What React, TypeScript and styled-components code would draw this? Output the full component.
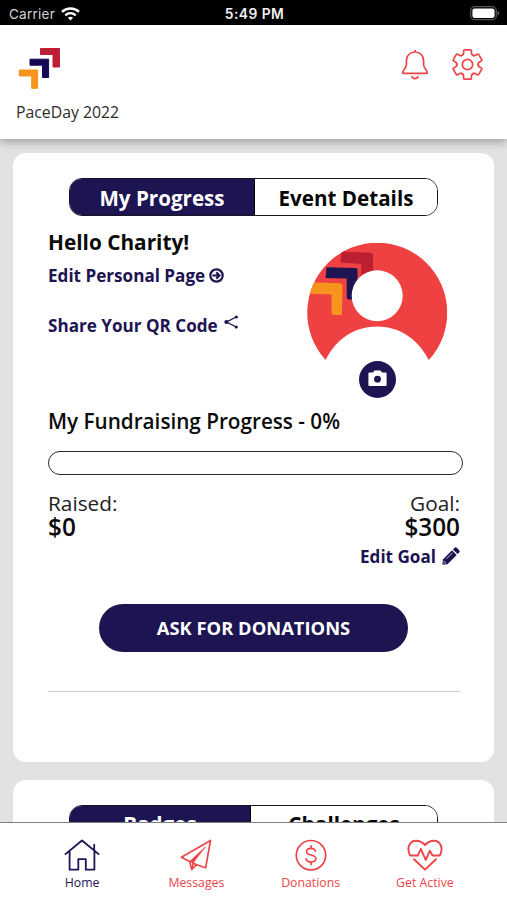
import React from "react";
import styled, { createGlobalStyle } from "styled-components";

const NAVY = "#1d1452";
const RED = "#ec4549";

const GlobalStyle = createGlobalStyle`
  * { box-sizing: border-box; }
  body { margin: 0; background: #e2e2e2; }
  svg { display: block; flex: none; overflow: visible; }
  button { font: inherit; cursor: pointer; }
`;

const Screen = styled.div`
  width: 507px;
  height: 900px;
  display: flex;
  flex-direction: column;
  overflow: hidden;
  background: #e2e2e2;
  color: #0b0b0b;
  font-family: "Open Sans", "Noto Sans", sans-serif;
`;

const StatusBar = styled.div`
  flex: none;
  height: 25px;
  padding: 2px 7px 0 9px;
  display: grid;
  grid-template-columns: 1fr auto 1fr;
  align-items: center;
  background: #000;
  color: #f2f2f2;
  font-family: Inter, sans-serif;
  font-size: 13.5px;
`;

const Carrier = styled.div`
  display: flex;
  align-items: center;
  gap: 6px;
  letter-spacing: 0.25px;
  color: #d4d4d4;
`;

const Clock = styled.div`
  font-size: 13.8px;
  font-weight: 600;
  letter-spacing: 0.45px;
`;

const BatterySlot = styled.div`
  justify-self: end;
`;

const Header = styled.header`
  flex: none;
  z-index: 1;
  height: 114px;
  padding: 23px 23px 0 16px;
  display: flex;
  justify-content: space-between;
  background: #fff;
  box-shadow: 0 2px 9px rgba(0, 0, 0, 0.36);
`;

const Brand = styled.div`
  display: flex;
  flex-direction: column;
  gap: 10px;
`;

const EventName = styled.div`
  font-size: 15.8px;
  line-height: 25px;
  color: #2b2b2b;
`;

const HeaderActions = styled.div`
  display: flex;
  height: 34px;
  gap: 23px;
`;

const IconButton = styled.button`
  display: flex;
  padding: 0;
  border: 0;
  background: none;
`;

const Content = styled.main`
  flex: 1;
  min-height: 0;
  overflow: hidden;
  display: flex;
  flex-direction: column;
  gap: 18px;
  padding: 14px 13px 0;
`;

const Card = styled.section<{ $height: number }>`
  flex: none;
  height: ${(p) => p.$height}px;
  padding: 25px 34px 0 35px;
  border-radius: 13px;
  background: #fff;
`;

const Tabs = styled.div`
  display: flex;
  width: 369px;
  height: 38px;
  margin: 0 0 0 21px;
  overflow: hidden;
  border: 1.5px solid #17151f;
  border-radius: 13px;
`;

const Tab = styled.button<{ $active?: boolean; $width?: number; $inset?: number }>`
  ${(p) => (p.$width ? `width: ${p.$width}px;` : "flex: 1;")}
  padding: ${(p) => p.$inset ?? 0}px 0 0;
  border: 0;
  border-right: ${(p) => (p.$active ? "1px solid #000" : "0")};
  background: ${(p) => (p.$active ? NAVY : "#fff")};
  color: ${(p) => (p.$active ? "#fff" : "#050505")};
  font-size: 20.6px;
  font-weight: 700;
  line-height: 36px;
`;

const Profile = styled.div`
  display: flex;
  justify-content: space-between;
  height: 182px;
  padding: 12px 13px 0 0;
`;

const Greeting = styled.h1`
  margin: 0;
  font-size: 20.8px;
  line-height: 28px;
  font-weight: 700;
`;

const TextLink = styled.a<{ $gap: number; $top: number }>`
  display: flex;
  align-items: center;
  gap: ${(p) => p.$gap}px;
  height: 24px;
  margin-top: ${(p) => p.$top}px;
  color: ${NAVY};
  font-size: 17.1px;
  font-weight: 700;
  white-space: nowrap;
`;

const ShareSlot = styled.span`
  padding-bottom: 6px;
`;

const Avatar = styled.div`
  width: 140px;
  display: flex;
  flex-direction: column;
  align-items: center;
  padding-top: 15px;
`;

const CameraButton = styled.button`
  display: flex;
  align-items: center;
  justify-content: center;
  width: 37px;
  height: 37px;
  padding: 0 0 3px;
  border: 0;
  border-radius: 50%;
  background: ${NAVY};
`;

const ProgressTitle = styled.h2`
  margin: 8px 0 0;
  font-size: 20.7px;
  line-height: 30px;
  font-weight: 600;
`;

const ProgressTrack = styled.div`
  width: 415px;
  height: 24px;
  margin-top: 15px;
  border: 1.5px solid #292929;
  border-radius: 12px;
`;

const Totals = styled.div`
  display: flex;
  justify-content: space-between;
  margin-top: 16px;
`;

const Total = styled.div<{ $end?: boolean }>`
  display: flex;
  flex-direction: column;
  align-items: ${(p) => (p.$end ? "flex-end" : "flex-start")};
`;

const TotalLabel = styled.div`
  font-size: 20.8px;
  line-height: 24px;
  color: #222;
`;

const Amount = styled.div`
  font-size: 24.3px;
  line-height: 24px;
  font-weight: 600;
`;

const DonateButton = styled.button`
  display: block;
  width: 309px;
  height: 48px;
  margin: 36px 0 0 51px;
  padding: 0 0 1px;
  border: 0;
  border-radius: 24px;
  background: ${NAVY};
  color: #fff;
  font-size: 18.35px;
  font-weight: 700;
`;

const Divider = styled.hr`
  height: 1px;
  margin: 39px 0 0;
  border: 0;
  background: #cbcbcb;
`;

const Nav = styled.nav`
  flex: none;
  z-index: 1;
  height: 78px;
  padding: 14.5px 25px 0;
  display: grid;
  grid-template-columns: repeat(4, 1fr);
  border-top: 1px solid #7f7f7f;
  background: #fff;
`;

const NavItem = styled.a<{ $active?: boolean }>`
  display: flex;
  flex-direction: column;
  align-items: center;
  gap: 1px;
  color: ${(p) => (p.$active ? NAVY : RED)};
  font-size: 12.3px;
  line-height: 20px;
`;

const Chevrons = () => (
  <svg width="48" height="42" viewBox="16 48 48 42" strokeLinejoin="round" strokeWidth="1">
    <path d="M40.5 48.5H59.5V67H53V54.5H40.5Z" fill="#bd1f35" stroke="#bd1f35" />
    <path d="M30 59.2H48.6V77.5H42.5V65.2H30Z" fill="#160655" stroke="#160655" />
    <path d="M19.3 70H37.6V88.3H31.7V76H19.3Z" fill="#f7941e" stroke="#f7941e" />
  </svg>
);

const Wifi = () => (
  <svg width="19" height="14" viewBox="0 0 19 14" fill="none" stroke="#fff" strokeWidth="2.4">
    <path d="M1 4.8C5.8.3 13.2.3 18 4.8" />
    <path d="M4.3 8.3C7.4 5.5 11.6 5.5 14.7 8.3" />
    <path d="M9.5 13.4L6.9 10.7C8.4 9.4 10.6 9.4 12.1 10.7Z" fill="#fff" stroke="none" />
  </svg>
);

const Battery = () => (
  <svg width="30" height="15" viewBox="0 0 30 15">
    <rect x="0.7" y="0.7" width="25.6" height="13" rx="4" fill="none" stroke="#555" strokeWidth="1.3" />
    <rect x="2.4" y="2.4" width="22.2" height="9.6" rx="2.3" fill="#fff" />
    <path d="M27.6 5C30 5.7 30 8.7 27.6 9.4Z" fill="#666" />
  </svg>
);

const Bell = () => (
  <svg width="28" height="34" viewBox="0 0 28 34" fill="none" stroke={RED} strokeWidth="1.7" strokeLinecap="round" strokeLinejoin="round">
    <path d="M14 2.5V4M14 4C8.8 4 5.4 7.8 5.4 12.5V16.5C5.4 20.5 1.7 22 1.7 24.7Q1.7 25.4 2.5 25.4H25.5Q26.3 25.4 26.3 24.7C26.3 22 22.6 20.5 22.6 16.5V12.5C22.6 7.8 19.2 4 14 4Z" />
    <path d="M11 28.6C11.8 31.4 16.2 31.4 17 28.6" />
  </svg>
);

const Gear = () => (
  <svg width="32" height="34" viewBox="-15.5 -16.5 32 34" fill="none" stroke={RED} strokeWidth="1.7" strokeLinejoin="round">
    {[0, 60, 120, 180, 240, 300].map((angle) => (
      <path
        key={angle}
        transform={`rotate(${angle})`}
        strokeLinecap="round"
        d="M-6.2-8.9Q-4-9.6-3.9-11.2V-13.7Q-3.9-14.7-2.9-14.7H2.9Q3.9-14.7 3.9-13.7V-11.2Q4-9.6 6.2-8.9"
      />
    ))}
    <circle r="5.2" />
  </svg>
);

const ArrowCircle = () => (
  <svg width="15" height="15" viewBox="0 0 15 15" fill="none" stroke={NAVY} strokeWidth="2.2">
    <circle cx="7.5" cy="7.5" r="6.2" />
    <path d="M3.4 7.5H10.4M7.3 4.4L10.4 7.5L7.3 10.6" />
  </svg>
);

const Share = () => (
  <svg width="14" height="14" viewBox="0.7 0 14 14" stroke={NAVY} fill={NAVY} strokeWidth="1.4">
    <path d="M12 2L2.2 7L12 12" fill="none" />
    <circle cx="12" cy="2" r="1.6" stroke="none" />
    <circle cx="2.1" cy="7" r="2.1" stroke="none" />
    <circle cx="12" cy="12" r="1.6" stroke="none" />
  </svg>
);

const Portrait = () => (
  <svg width="140" height="118" viewBox="307.5 243 140 118">
    <defs>
      <clipPath id="portrait-disc">
        <path d="M326.2 360A70 70 0 1 1 429.3 360C418 338 399 326.5 377.7 326.5C356 326.5 337 338 326.2 360Z" />
      </clipPath>
    </defs>
    <g clipPath="url(#portrait-disc)">
      <rect x="307" y="243" width="141" height="118" fill="#ef4142" />
      <path d="M342 251.5L371 252.7Q373.5 253 373.5 255V271L361 278L362 264L341 262.5Z" fill="#bd1f32" />
      <path d="M327 267.3L356 268Q358 268.2 358 270V299.5H349Q347.2 299 347.2 296.5V278.5L326 278Z" fill="#1d1452" />
      <path d="M307 282.3L341 283.3Q343 283.5 343 285.5L342.3 315H334Q332 315 332 313V294.5L307 293.6Z" fill="#f7941e" />
    </g>
    <circle cx="377.7" cy="295.8" r="25.5" fill="#fff" />
  </svg>
);

const Camera = () => (
  <svg width="19" height="17" viewBox="0 0 19 17">
    <path d="M1.4 2.5H5L6.2.8Q6.5.4 7 .4H12Q12.5.4 12.8.8L14 2.5H17.6Q18.6 2.5 18.6 3.5V15Q18.6 16 17.6 16H1.4Q.4 16 .4 15V3.5Q.4 2.5 1.4 2.5Z" fill="#fff" />
    <circle cx="9.5" cy="9.2" r="3.4" fill={NAVY} />
  </svg>
);

const Pencil = () => (
  <svg width="18" height="18" viewBox="0 0 18 18" fill={NAVY}>
    <path d="M12.5.8Q13.6-.3 14.8.8L17.2 3.2Q18.3 4.4 17.2 5.5L15.6 7.1L10.9 2.4ZM10 3.3L14.7 8L5.5 17.2L.4 17.7L.9 12.5Z" />
    <path d="M4.5 11.8L10.5 5.8" stroke="#fff" strokeWidth=".7" />
    <path d="M1.8 13.7L4.4 16.3L1.6 16.6Z" fill="#fff" />
    <circle cx="2.3" cy="15.8" r=".8" />
  </svg>
);

const HomeIcon = () => (
  <svg width="36" height="34" viewBox="0 0 36 34" fill="none" stroke="currentColor" strokeWidth="1.8" strokeLinecap="round" strokeLinejoin="round">
    <path d="M1.4 16.1L18 2.5L34.6 16.1M30.2 12V6.7M5.6 13.2V31.7H14.3V21.2H21.8V31.7H30.4V13.2" />
  </svg>
);

const MessagesIcon = () => (
  <svg width="32" height="34" viewBox="0 0 32 34" fill="none" stroke="currentColor" strokeWidth="1.7" strokeLinecap="round" strokeLinejoin="round">
    <path d="M30.5 2.4L1.4 19.2L9.6 23.4L11.7 31.4L16.6 26.7L25.7 29.7L30.5 2.4Z" />
    <path d="M13.1 25L11.7 31.4M13.1 25L16.6 26.7" />
    <path d="M9.6 23.4L25.7 8.6L13.1 25Z" fill="currentColor" strokeWidth=".6" />
  </svg>
);

const DonationsIcon = () => (
  <svg width="32" height="34" viewBox="0 0 32 34" fill="none" stroke="currentColor" strokeWidth="1.7" strokeLinecap="round">
    <circle cx="16" cy="17.2" r="14.7" />
    <path d="M20.4 13.2C20 11.2 18.3 10.3 16 10.3C13.3 10.3 11.5 11.6 11.5 13.7C11.5 18.3 20.8 15.7 20.8 20.5C20.8 22.7 18.8 24 16.1 24C13.5 24 11.6 22.9 11.2 20.8M16 7.8V10.3M16 24V26.6" />
  </svg>
);

const ActiveIcon = () => (
  <svg width="36" height="34" viewBox="0 0 36 34" fill="none" stroke="currentColor" strokeWidth="1.9" strokeLinecap="round" strokeLinejoin="round">
    <path d="M3.2 17.5C-.8 10 2.5 2.8 9.2 2.8C13.5 2.8 15.5 4.3 18 7C20.5 4.3 22.5 2.8 26.8 2.8C33.5 2.8 36.8 10 32.8 17.5H25.5L22.8 12.8L18.7 22L13.9 10.8L10.8 17.5H3.2" />
    <path d="M7 21.2L18 31.6L29 21.2" />
  </svg>
);

const navItems = [
  { label: "Home", icon: HomeIcon, active: true },
  { label: "Messages", icon: MessagesIcon, active: false },
  { label: "Donations", icon: DonationsIcon, active: false },
  { label: "Get Active", icon: ActiveIcon, active: false },
];

export default function App() {
  return (
    <>
      <GlobalStyle />
      <Screen>
        <StatusBar>
          <Carrier>Carrier<Wifi /></Carrier>
          <Clock>5:49 PM</Clock>
          <BatterySlot><Battery /></BatterySlot>
        </StatusBar>
        <Header>
          <Brand>
            <Chevrons />
            <EventName>PaceDay 2022</EventName>
          </Brand>
          <HeaderActions>
            <IconButton aria-label="Notifications"><Bell /></IconButton>
            <IconButton aria-label="Settings"><Gear /></IconButton>
          </HeaderActions>
        </Header>
        <Content>
          <Card $height={609}>
            <Tabs>
              <Tab $active $width={185} $inset={1}>My Progress</Tab>
              <Tab $inset={1}>Event Details</Tab>
            </Tabs>
            <Profile>
              <div>
                <Greeting>Hello Charity!</Greeting>
                <TextLink $gap={3.5} $top={7}>Edit Personal Page<ArrowCircle /></TextLink>
                <TextLink $gap={7} $top={26}>Share Your QR Code<ShareSlot><Share /></ShareSlot></TextLink>
              </div>
              <Avatar>
                <Portrait />
                <CameraButton aria-label="Change photo"><Camera /></CameraButton>
              </Avatar>
            </Profile>
            <ProgressTitle>My Fundraising Progress - 0%</ProgressTitle>
            <ProgressTrack />
            <Totals>
              <Total>
                <TotalLabel>Raised:</TotalLabel>
                <Amount>$0</Amount>
              </Total>
              <Total $end>
                <TotalLabel>Goal:</TotalLabel>
                <Amount>$300</Amount>
                <TextLink $gap={6} $top={5}>Edit Goal<Pencil /></TextLink>
              </Total>
            </Totals>
            <DonateButton>ASK FOR DONATIONS</DonateButton>
            <Divider />
          </Card>
          <Card $height={609}>
            <Tabs>
              <Tab $active $width={181}>Badges</Tab>
              <Tab>Challenges</Tab>
            </Tabs>
          </Card>
        </Content>
        <Nav>
          {navItems.map(({ label, icon: Icon, active }) => (
            <NavItem key={label} $active={active}>
              <Icon />
              {label}
            </NavItem>
          ))}
        </Nav>
      </Screen>
    </>
  );
}
